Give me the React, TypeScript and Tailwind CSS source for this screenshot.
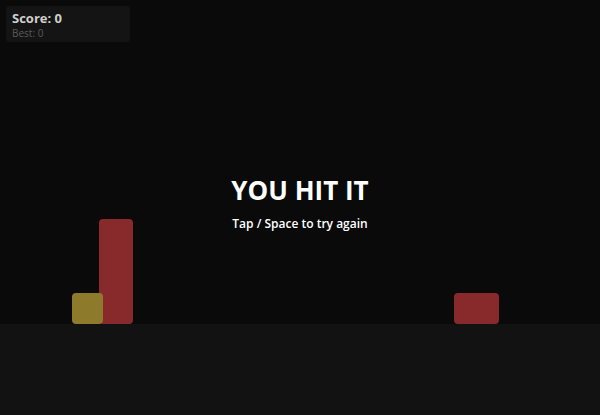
import React from "react";

const font = { fontFamily: '"Open Sans", "Noto Sans", sans-serif' };

export default function App() {
  return (
    <div
      className="relative w-[600px] h-[415px] overflow-hidden bg-[#0a0a0a] flex flex-col"
      style={font}
    >
      {/* Play field */}
      <div className="relative flex-1">
        {/* Obstacles and player */}
        <div className="absolute left-[99px] top-[219px] w-[34px] h-[105px] rounded-[4px] bg-[#882a2c]" />
        <div className="absolute left-[454px] top-[293px] w-[45px] h-[31px] rounded-[4px] bg-[#882a2c]" />
        <div className="absolute left-[72px] top-[293px] w-[31px] h-[31px] rounded-[4px] bg-[#8e7a2b]" />
      </div>

      {/* Ground */}
      <div className="h-[91px] bg-[#121212]" />

      {/* Score panel */}
      <div className="absolute left-[6px] top-[6px] w-[124px] h-[36px] rounded bg-[#141414] px-[6px] pt-[4px] flex flex-col">
        <span className="text-[13px] leading-[17px] font-bold text-[#cfcfcf]">Score: 0</span>
        <span className="text-[10px] leading-[12px] text-[#5a5a5a]">Best: 0</span>
      </div>

      {/* Game over overlay */}
      <div className="absolute inset-x-0 top-[172px] flex flex-col items-center text-white">
        <span className="text-[26px] leading-[36px] font-bold">YOU HIT IT</span>
        <span className="mt-[7px] text-[12px] leading-[18px] font-semibold">Tap / Space to try again</span>
      </div>
    </div>
  );
}
